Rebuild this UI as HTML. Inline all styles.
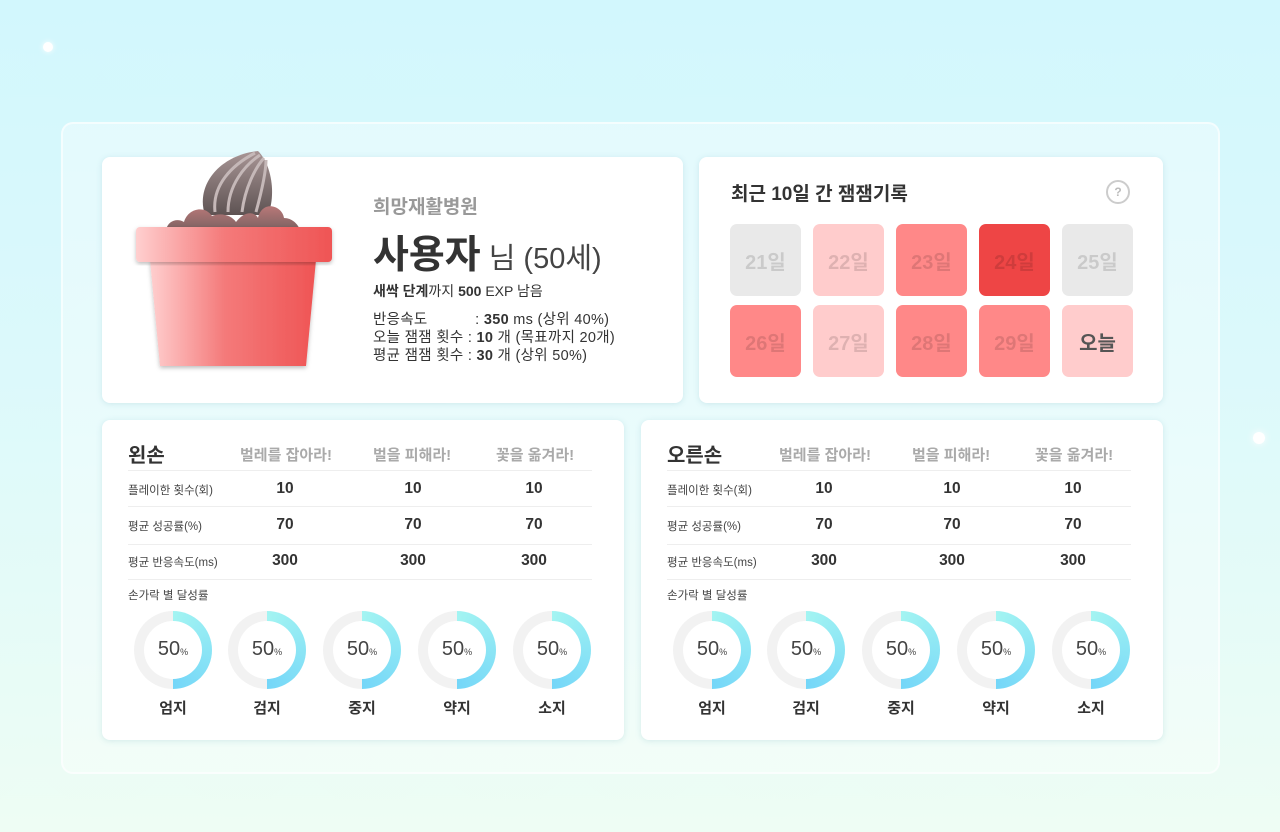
<!DOCTYPE html>
<html><head><meta charset="utf-8"><style>
*{margin:0;padding:0;box-sizing:border-box}
body{width:1280px;height:832px;overflow:hidden;font-family:"Liberation Sans","Noto Sans CJK KR",sans-serif;color:#333;background:linear-gradient(180deg,#d2f7fd 0%,#dcf9fb 45%,#eefdf4 100%);position:relative}
.abs{position:absolute}
.panel{left:61px;top:122px;width:1159px;height:652px;border-radius:12px;background:rgba(255,255,255,0.35);border:2px solid rgba(255,255,255,0.6)}
.card{position:absolute;background:#fff;border-radius:8px;box-shadow:0 1px 6px rgba(120,180,190,0.25)}
.t{position:absolute;white-space:nowrap}
.tile{position:absolute;width:71px;height:72px;border-radius:7px;font-weight:bold;font-size:20px;display:flex;align-items:center;justify-content:center;color:rgba(0,0,0,0.13)}
.hd{font-size:15px;color:#aaa;font-weight:bold}
.line{position:absolute;height:1px;background:#eee}
.lab{font-size:11.5px;color:#444}
.val{font-size:15.5px;font-weight:bold;color:#333;transform:translateX(-50%)}
.donut{position:absolute;width:78px;height:78px;border-radius:50%;background:conic-gradient(#a3f4f2 0deg,#74d6f8 180deg,#f2f2f2 180deg 360deg)}
.donut::after{content:"";position:absolute;left:10px;top:10px;width:58px;height:58px;border-radius:50%;background:#fff}
.dn{position:absolute;z-index:2;left:0;width:78px;top:27px;text-align:center;font-size:20px;color:#444}
.dn small{font-size:9px}
.fl{position:absolute;width:78px;text-align:center;font-size:15px;font-weight:bold;color:#333}
</style></head><body>
<div class="abs panel"></div>

<div class="card" style="left:102px;top:157px;width:581px;height:246px"></div>
<svg class="abs" style="left:120px;top:140px" width="230" height="240" viewBox="120 140 230 240">
<defs>
<linearGradient id="pg" x1="0" x2="1"><stop offset="0" stop-color="#ffcfcf"/><stop offset="0.45" stop-color="#f47a7a"/><stop offset="1" stop-color="#ef5555"/></linearGradient>
<linearGradient id="sg" x1="0" y1="0" x2="0" y2="1"><stop offset="0" stop-color="#a89595"/><stop offset="1" stop-color="#5e5353"/></linearGradient>
<linearGradient id="so" x1="0" y1="0" x2="0" y2="1"><stop offset="0" stop-color="#b87878"/><stop offset="1" stop-color="#7d6262"/></linearGradient>
<filter id="sh"><feDropShadow dx="0" dy="2" stdDeviation="2" flood-opacity="0.25"/></filter>
</defs>
<path d="M205 215 C195 185 220 155 258 151 C272 165 276 195 268 215 Z" fill="url(#sg)"/>
<path d="M215 212 C212 185 232 165 255 153 M228 212 C228 185 245 165 260 155 M242 212 C245 188 255 168 264 158 M256 212 C262 190 266 170 266 160" stroke="#c5b8b8" stroke-width="3" fill="none"/>
<path d="M166 230 C168 220 178 218 184 222 C188 208 205 205 212 216 C222 212 232 216 236 222 C245 210 255 212 258 218 C262 200 282 205 284 218 C292 218 298 224 300 230 Z" fill="url(#so)"/>
<path d="M150 260 L316 260 L306 366 L160 366 Z" fill="url(#pg)" filter="url(#sh)"/>
<rect x="136" y="227" width="196" height="35" rx="4" fill="url(#pg)" filter="url(#sh)"/>
</svg>
<div class="t" style="left:373px;top:192px;font-size:19px;font-weight:bold;color:#999">희망재활병원</div>
<div class="t" style="left:373px;top:224px;font-size:39px;color:#333"><b>사용자</b><span style="font-size:29px;color:#444"> 님 (50세)</span></div>
<div class="t" style="left:373px;top:281px;font-size:14px"><b>새싹 단계</b>까지 <b>500</b> EXP 남음</div>
<div class="t" style="left:373px;top:311px;font-size:14.5px;line-height:18px;color:#333;letter-spacing:0.3px">반응속도&nbsp;&nbsp;&nbsp;&nbsp;&nbsp;&nbsp;&nbsp;&nbsp;&nbsp;&nbsp; : <b>350</b> ms (상위 40%)<br>오늘 잼잼 횟수 : <b>10</b> 개 (목표까지 20개)<br>평균 잼잼 횟수 : <b>30</b> 개 (상위 50%)</div>

<div class="card" style="left:699px;top:157px;width:464px;height:246px"></div>
<div class="t" style="left:731px;top:179px;font-size:19px;font-weight:bold;color:#333">최근 10일 간 잼잼기록</div>
<div class="abs" style="left:1106px;top:180px;width:24px;height:24px;border-radius:50%;border:2px solid #ccc;color:#bbb;font-size:12px;font-weight:bold;text-align:center;line-height:20px">?</div>
<div class="tile" style="left:730px;top:224px;background:#e9e9e9">21일</div>
<div class="tile" style="left:813px;top:224px;background:#ffcccc">22일</div>
<div class="tile" style="left:896px;top:224px;background:#ff8888">23일</div>
<div class="tile" style="left:979px;top:224px;background:#ee4545">24일</div>
<div class="tile" style="left:1062px;top:224px;background:#e9e9e9">25일</div>
<div class="tile" style="left:730px;top:305px;background:#ff8888">26일</div>
<div class="tile" style="left:813px;top:305px;background:#ffcccc">27일</div>
<div class="tile" style="left:896px;top:305px;background:#ff8888">28일</div>
<div class="tile" style="left:979px;top:305px;background:#ff8888">29일</div>
<div class="tile" style="left:1062px;top:305px;background:#ffcccc;color:#555">오늘</div>

<div class="card" style="left:102px;top:420px;width:522px;height:320px"></div>
<div class="card" style="left:641px;top:420px;width:522px;height:320px"></div>

<div style="position:absolute;left:0;top:0;width:1280px;height:832px">
<div class="t" style="left:128px;top:439px;font-size:20px;font-weight:bold">왼손</div>
<div class="t hd" style="left:240px;top:444px">벌레를 잡아라!</div>
<div class="t hd" style="left:373px;top:444px">벌을 피해라!</div>
<div class="t hd" style="left:496px;top:444px">꽃을 옮겨라!</div>
<div class="line" style="left:128px;top:470px;width:464px"></div>
<div class="line" style="left:128px;top:506px;width:464px"></div>
<div class="line" style="left:128px;top:544px;width:464px"></div>
<div class="line" style="left:128px;top:579px;width:464px"></div>
<div class="t lab" style="left:128px;top:482px">플레이한 횟수(회)</div>
<div class="t lab" style="left:128px;top:518px">평균 성공률(%)</div>
<div class="t lab" style="left:128px;top:554px">평균 반응속도(ms)</div>
<div class="t val" style="left:285px;top:480px">10</div><div class="t val" style="left:413px;top:480px">10</div><div class="t val" style="left:534px;top:480px">10</div>
<div class="t val" style="left:285px;top:516px">70</div><div class="t val" style="left:413px;top:516px">70</div><div class="t val" style="left:534px;top:516px">70</div>
<div class="t val" style="left:285px;top:552px">300</div><div class="t val" style="left:413px;top:552px">300</div><div class="t val" style="left:534px;top:552px">300</div>
<div class="t lab" style="left:128px;top:587px">손가락 별 달성률</div>
<div class="donut" style="left:134px;top:611px"><div class="dn">50<small>%</small></div></div>
<div class="donut" style="left:228px;top:611px"><div class="dn">50<small>%</small></div></div>
<div class="donut" style="left:323px;top:611px"><div class="dn">50<small>%</small></div></div>
<div class="donut" style="left:418px;top:611px"><div class="dn">50<small>%</small></div></div>
<div class="donut" style="left:513px;top:611px"><div class="dn">50<small>%</small></div></div>
<div class="fl" style="left:134px;top:697px">엄지</div>
<div class="fl" style="left:228px;top:697px">검지</div>
<div class="fl" style="left:323px;top:697px">중지</div>
<div class="fl" style="left:418px;top:697px">약지</div>
<div class="fl" style="left:513px;top:697px">소지</div>
</div>

<div style="position:absolute;left:539px;top:0;width:1280px;height:832px">
<div class="t" style="left:128px;top:439px;font-size:20px;font-weight:bold">오른손</div>
<div class="t hd" style="left:240px;top:444px">벌레를 잡아라!</div>
<div class="t hd" style="left:373px;top:444px">벌을 피해라!</div>
<div class="t hd" style="left:496px;top:444px">꽃을 옮겨라!</div>
<div class="line" style="left:128px;top:470px;width:464px"></div>
<div class="line" style="left:128px;top:506px;width:464px"></div>
<div class="line" style="left:128px;top:544px;width:464px"></div>
<div class="line" style="left:128px;top:579px;width:464px"></div>
<div class="t lab" style="left:128px;top:482px">플레이한 횟수(회)</div>
<div class="t lab" style="left:128px;top:518px">평균 성공률(%)</div>
<div class="t lab" style="left:128px;top:554px">평균 반응속도(ms)</div>
<div class="t val" style="left:285px;top:480px">10</div><div class="t val" style="left:413px;top:480px">10</div><div class="t val" style="left:534px;top:480px">10</div>
<div class="t val" style="left:285px;top:516px">70</div><div class="t val" style="left:413px;top:516px">70</div><div class="t val" style="left:534px;top:516px">70</div>
<div class="t val" style="left:285px;top:552px">300</div><div class="t val" style="left:413px;top:552px">300</div><div class="t val" style="left:534px;top:552px">300</div>
<div class="t lab" style="left:128px;top:587px">손가락 별 달성률</div>
<div class="donut" style="left:134px;top:611px"><div class="dn">50<small>%</small></div></div>
<div class="donut" style="left:228px;top:611px"><div class="dn">50<small>%</small></div></div>
<div class="donut" style="left:323px;top:611px"><div class="dn">50<small>%</small></div></div>
<div class="donut" style="left:418px;top:611px"><div class="dn">50<small>%</small></div></div>
<div class="donut" style="left:513px;top:611px"><div class="dn">50<small>%</small></div></div>
<div class="fl" style="left:134px;top:697px">엄지</div>
<div class="fl" style="left:228px;top:697px">검지</div>
<div class="fl" style="left:323px;top:697px">중지</div>
<div class="fl" style="left:418px;top:697px">약지</div>
<div class="fl" style="left:513px;top:697px">소지</div>
</div>

<div class="abs" style="left:43px;top:42px;width:10px;height:10px;border-radius:50%;background:#fff;box-shadow:0 0 6px #fff"></div>
<div class="abs" style="left:1253px;top:432px;width:12px;height:12px;border-radius:50%;background:#fff;box-shadow:0 0 8px #fff"></div>
</body></html>
